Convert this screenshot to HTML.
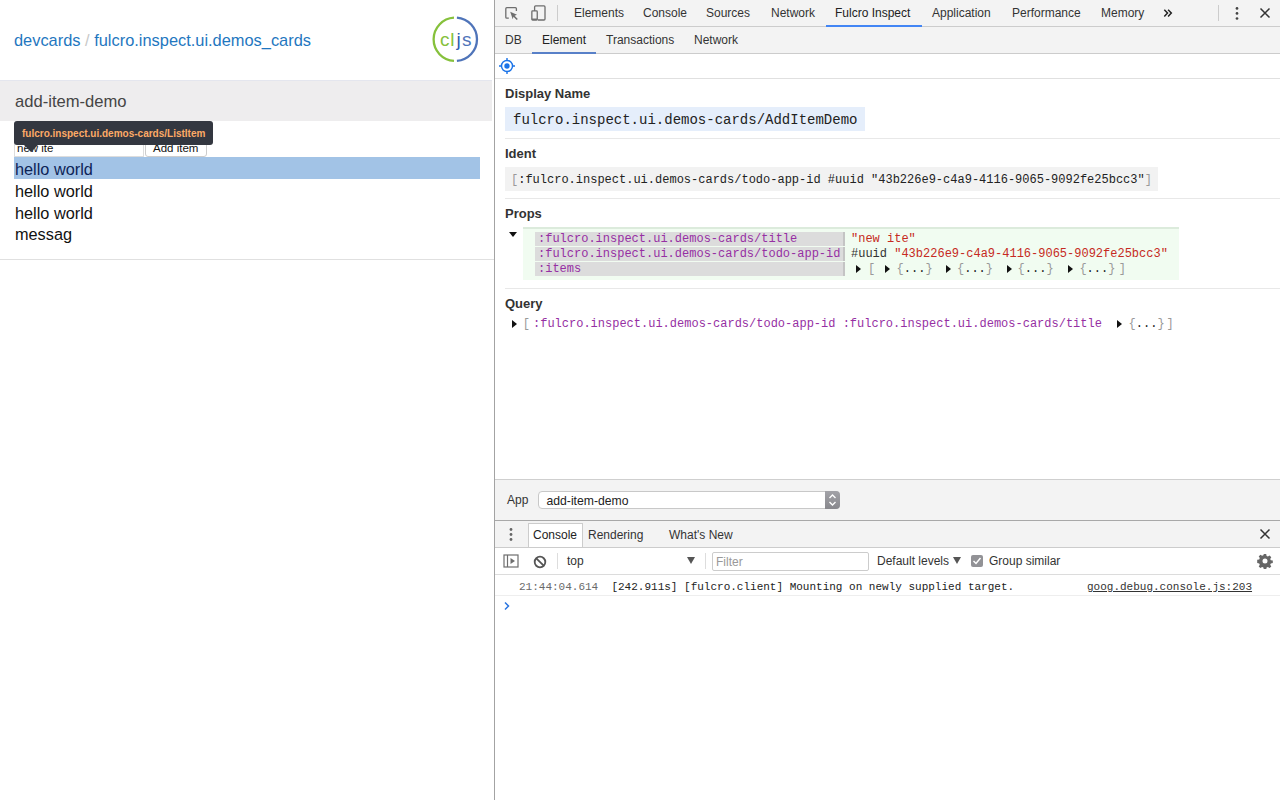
<!DOCTYPE html>
<html><head><meta charset="utf-8">
<style>
*{box-sizing:border-box;margin:0;padding:0}
html,body{width:1280px;height:800px;overflow:hidden;background:#fff;font-family:"Liberation Sans",sans-serif;position:relative}
.a{position:absolute;white-space:pre}
.mono{font-family:"Liberation Mono",monospace}
/* left */
#left{position:absolute;left:0;top:0;width:494px;height:800px;background:#fff}
#vdiv{position:absolute;left:494px;top:0;width:1px;height:800px;background:#a3a3a3}
#dt{position:absolute;left:495px;top:0;width:785px;height:800px;background:#fff;overflow:hidden}
.tb{position:absolute;left:0;width:785px;background:#f3f3f3}
.tab{position:absolute;font-size:12px;color:#333;top:6px}
.sub{position:absolute;font-size:12px;color:#333;top:33px}
.h{position:absolute;font-size:13px;font-weight:bold;color:#333;left:10px}
.sep{position:absolute;left:10px;width:775px;height:1px;background:#e8e8e8}
.kw{color:#962fa3}
.str{color:#c62a22}
.tri{position:absolute;width:0;height:0;border-top:4px solid transparent;border-bottom:4px solid transparent;border-left:5px solid #111}
.br{color:#999}.br b{font-weight:normal;color:#222}
</style></head><body>
<div id="left">
  <div class="a" style="left:14px;top:31px;font-size:16.4px;color:#1f77c0">devcards <span style="color:#c8c8c8">/</span> fulcro.inspect.ui.demos_cards</div>
  <svg style="position:absolute;left:430px;top:15px" width="50" height="50" viewBox="0 0 50 50">
    <path d="M24 2.64 A21.7 21.7 0 0 0 24 45.96" fill="none" stroke="#86c13c" stroke-width="2.3"/>
    <path d="M26.9 2.66 A21.7 21.7 0 0 1 26.9 45.94" fill="none" stroke="#4f74b9" stroke-width="2.3"/>
    <text x="10.1" y="30.5" font-family="Liberation Sans" font-size="19" fill="#86c13c">c</text>
    <text x="20.25" y="30.5" font-family="Liberation Sans" font-size="19" fill="#86c13c">l</text>
    <text x="26.5" y="30.5" font-family="Liberation Sans" font-size="19" fill="#2f5cb0">j</text>
    <text x="32.1" y="30.5" font-family="Liberation Sans" font-size="19" fill="#4f74b9">s</text>
  </svg>
  <div style="position:absolute;left:0;top:80px;width:492px;height:41px;background:#eeedee;border-top:1px solid #e4e6ee"></div>
  <div class="a" style="left:15px;top:92px;font-size:16.6px;color:#454545">add-item-demo</div>
  <!-- input + button -->
  <div style="position:absolute;left:14px;top:139px;width:130px;height:18px;border:1px solid #ddd;border-top-color:#aaa;background:#fff"></div>
  <div class="a" style="left:17px;top:142px;font-size:11.5px;color:#111">new ite</div>
  <div style="position:absolute;left:145px;top:139px;width:62px;height:18px;border:1px solid #ccc;border-radius:3px;background:#fff"></div>
  <div class="a" style="left:153px;top:142px;font-size:11.5px;color:#111">Add item</div>
  <!-- list -->
  <div style="position:absolute;left:14px;top:157px;width:466px;height:22px;background:#a2c3e6"></div>
  <div class="a" style="left:15px;top:158px;font-size:16.3px;color:#0d2457;line-height:22px">hello world</div>
  <div class="a" style="left:15px;top:180px;font-size:16.3px;color:#111;line-height:22px">hello world</div>
  <div class="a" style="left:15px;top:202px;font-size:16.3px;color:#111;line-height:22px">hello world</div>
  <div class="a" style="left:15px;top:223px;font-size:16.3px;color:#111;line-height:22px">messag</div>
  <div style="position:absolute;left:0;top:259px;width:494px;height:1px;background:#e0e0e0"></div>
  <!-- tooltip -->
  <div style="position:absolute;left:14px;top:121px;width:199px;height:24px;background:#333740;border-radius:3px"></div>
  <div style="position:absolute;left:22.5px;top:144px;width:0;height:0;border-left:8.5px solid transparent;border-right:8.5px solid transparent;border-top:8px solid #333740"></div>
  <div class="a" style="left:22px;top:128px;font-size:10px;font-weight:bold;color:#fdaa66">fulcro.inspect.ui.demos-cards/ListItem</div>
</div>
<div id="vdiv"></div>
<div id="dt">
  <!-- top toolbar -->
  <div class="tb" style="top:0;height:27px;border-bottom:1px solid #cccccc"></div>
  <svg style="position:absolute;left:8px;top:4px" width="20" height="20" viewBox="0 0 20 20">
    <path d="M5.8 14.2 H3.8 Q2.8 14.2 2.8 13.2 V4.7 Q2.8 3.7 3.8 3.7 H12.4 Q13.4 3.7 13.4 4.7 V6.9" fill="none" stroke="#6e6e6e" stroke-width="1.3"/>
    <path d="M7.2 7.8 L14 10.8 L11.6 11.7 L14.8 14.9 L13.7 16 L10.5 12.8 L9.7 15.2 Z" fill="#6e6e6e"/>
  </svg>
  <svg style="position:absolute;left:34px;top:4px" width="20" height="20" viewBox="0 0 20 20">
    <path d="M5.6 6.9 V2.9 Q5.6 1.9 6.6 1.9 H15 Q16 1.9 16 2.9 V15 Q16 16 15 16 H8.8" fill="none" stroke="#6e6e6e" stroke-width="1.3"/>
    <rect x="2.85" y="6.9" width="5.4" height="9.1" fill="none" stroke="#6e6e6e" stroke-width="1.3" rx="0.8"/>
    <path d="M2.85 15.2 H8.25" stroke="#6e6e6e" stroke-width="1.3"/>
  </svg>
  <div style="position:absolute;left:62px;top:5px;width:1px;height:16px;background:#ccc"></div>
  <div class="tab" style="left:79px">Elements</div>
  <div class="tab" style="left:148px">Console</div>
  <div class="tab" style="left:211px">Sources</div>
  <div class="tab" style="left:276px">Network</div>
  <div class="tab" style="left:340px;color:#222">Fulcro Inspect</div>
  <div style="position:absolute;left:331px;top:25px;width:96px;height:2px;background:#4285f4"></div>
  <div class="tab" style="left:437px">Application</div>
  <div class="tab" style="left:517px">Performance</div>
  <div class="tab" style="left:606px">Memory</div>
  <svg style="position:absolute;left:668px;top:8px" width="10" height="10" viewBox="0 0 10 10"><path d="M1.3 1.8 L4.5 5.1 L1.3 8.4 M5.1 1.8 L8.3 5.1 L5.1 8.4" fill="none" stroke="#222" stroke-width="1.5"/></svg>
  <div style="position:absolute;left:723px;top:5px;width:1px;height:16px;background:#ccc"></div>
  <svg style="position:absolute;left:739.4px;top:6px" width="6" height="15" viewBox="0 0 6 15">
    <circle cx="3" cy="2.4" r="1.35" fill="#444"/><circle cx="3" cy="7.4" r="1.35" fill="#444"/><circle cx="3" cy="12.5" r="1.35" fill="#444"/>
  </svg>
  <svg style="position:absolute;left:764px;top:7px" width="12" height="12" viewBox="0 0 12 12">
    <path d="M1.5 1.5 L10.5 10.5 M10.5 1.5 L1.5 10.5" stroke="#333" stroke-width="1.5"/>
  </svg>
  <!-- sub toolbar -->
  <div class="tb" style="top:27px;height:27px;border-bottom:1px solid #cccccc"></div>
  <div class="sub" style="left:10px">DB</div>
  <div class="sub" style="left:47px;color:#222">Element</div>
  <div style="position:absolute;left:37px;top:52px;width:64px;height:2px;background:#5880c8"></div>
  <div class="sub" style="left:111px">Transactions</div>
  <div class="sub" style="left:199px">Network</div>
  <!-- inspect row -->
  <svg style="position:absolute;left:4px;top:58px" width="16" height="16" viewBox="0 0 16 16">
    <circle cx="8" cy="8" r="5.5" fill="none" stroke="#1a73e8" stroke-width="1.4"/>
    <circle cx="8" cy="8" r="2.7" fill="#1a73e8"/>
    <path d="M8 0 V2.5 M8 13.5 V16 M0 8 H2.5 M13.5 8 H16" stroke="#1a73e8" stroke-width="1.4"/>
  </svg>
  <div style="position:absolute;left:0;top:78px;width:785px;height:1px;background:#e0e0e0"></div>

  <!-- Display Name -->
  <div class="h" style="top:86px">Display Name</div>
  <div style="position:absolute;left:10px;top:107px;width:360px;height:24px;background:#e5eefb"></div>
  <div class="a mono" style="left:18px;top:112px;font-size:14px;color:#222">fulcro.inspect.ui.demos-cards/AddItemDemo</div>
  <div class="sep" style="top:138px"></div>
  <!-- Ident -->
  <div class="h" style="top:146px">Ident</div>
  <div style="position:absolute;left:10px;top:167px;width:653px;height:24px;background:#f2f2f2"></div>
  <div class="a mono" style="left:16px;top:173px;font-size:12px;color:#222"><span style="color:#999">[</span>:fulcro.inspect.ui.demos-cards/todo-app-id #uuid "43b226e9-c4a9-4116-9065-9092fe25bcc3"<span style="color:#999">]</span></div>
  <div class="sep" style="top:198px"></div>
  <!-- Props -->
  <div class="h" style="top:206px">Props</div>
  <div style="position:absolute;left:14px;top:232px;width:0;height:0;border-left:4px solid transparent;border-right:4px solid transparent;border-top:5px solid #111"></div>
  <div style="position:absolute;left:28px;top:227px;width:656px;height:53px;background:#f1fcf1;border-top:2px solid #dcebdc"></div>
  <div style="position:absolute;left:40px;top:232px;width:310px;height:14px;background:#dcdcdc;border-right:2px solid #c4c4c4"></div>
  <div style="position:absolute;left:40px;top:247px;width:310px;height:14px;background:#dcdcdc;border-right:2px solid #c4c4c4"></div>
  <div style="position:absolute;left:40px;top:262px;width:310px;height:14px;background:#dcdcdc;border-right:2px solid #c4c4c4"></div>
  <div class="a mono kw" style="left:43px;top:232px;font-size:12px;line-height:14px">:fulcro.inspect.ui.demos-cards/title</div>
  <div class="a mono kw" style="left:43px;top:247px;font-size:12px;line-height:14px">:fulcro.inspect.ui.demos-cards/todo-app-id</div>
  <div class="a mono kw" style="left:43px;top:262px;font-size:12px;line-height:14px">:items</div>
  <div class="a mono str" style="left:356px;top:232px;font-size:12px;line-height:14px">"new ite"</div>
  <div class="a mono" style="left:356px;top:247px;font-size:12px;line-height:14px;color:#333">#uuid <span class="str">"43b226e9-c4a9-4116-9065-9092fe25bcc3"</span></div>
  <div class="tri" style="left:361px;top:265px"></div>
  <div class="a mono br" style="left:373px;top:262px;font-size:12px;line-height:14px">[</div>
  <div class="tri" style="left:390px;top:265px"></div>
  <div class="a mono br" style="left:401.6px;top:262px;font-size:12px;line-height:14px">{<b>...</b>}</div>
  <div class="tri" style="left:451px;top:265px"></div>
  <div class="a mono br" style="left:462px;top:262px;font-size:12px;line-height:14px">{<b>...</b>}</div>
  <div class="tri" style="left:512px;top:265px"></div>
  <div class="a mono br" style="left:522.6px;top:262px;font-size:12px;line-height:14px">{<b>...</b>}</div>
  <div class="tri" style="left:573px;top:265px"></div>
  <div class="a mono br" style="left:584.4px;top:262px;font-size:12px;line-height:14px">{<b>...</b>}</div>
  <div class="a mono br" style="left:623.8px;top:262px;font-size:12px;line-height:14px">]</div>
  <div class="sep" style="top:288px"></div>
  <!-- Query -->
  <div class="h" style="top:296px">Query</div>
  <div class="tri" style="left:17px;top:320px"></div>
  <div class="a mono br" style="left:27.8px;top:317px;font-size:12px;line-height:14px">[</div>
  <div class="a mono kw" style="left:38px;top:317px;font-size:12px;line-height:14px">:fulcro.inspect.ui.demos-cards/todo-app-id :fulcro.inspect.ui.demos-cards/title</div>
  <div class="tri" style="left:622px;top:320px"></div>
  <div class="a mono br" style="left:633.6px;top:317px;font-size:12px;line-height:14px">{<b>...</b>}</div>
  <div class="a mono br" style="left:671.6px;top:317px;font-size:12px;line-height:14px">]</div>

  <!-- App bar -->
  <div class="tb" style="top:479px;height:42px;border-top:1px solid #cfcfcf;border-bottom:1px solid #a8a8a8"></div>
  <div class="a" style="left:12px;top:493px;font-size:12px;color:#333">App</div>
  <div style="position:absolute;left:43px;top:491px;width:302px;height:18px;background:#fff;border:1px solid #c8c8c8;border-radius:4px"></div>
  <div class="a" style="left:51.5px;top:493.5px;font-size:12.2px;color:#222">add-item-demo</div>
  <div style="position:absolute;left:330px;top:491px;width:15px;height:18px;background:linear-gradient(#a3a3a8,#88888d);border-radius:0 4px 4px 0"></div>
  <svg style="position:absolute;left:330px;top:491px" width="15" height="18" viewBox="0 0 15 18"><path d="M4.5 7 L7.5 4 L10.5 7 M4.5 11 L7.5 14 L10.5 11" fill="none" stroke="#fff" stroke-width="1.4"/></svg>

  <!-- Console drawer tabs -->
  <div class="tb" style="top:521px;height:27px;border-bottom:1px solid #cccccc"></div>
  <svg style="position:absolute;left:13px;top:527px" width="6" height="15" viewBox="0 0 6 15">
    <circle cx="3" cy="2.5" r="1.4" fill="#666"/><circle cx="3" cy="7.5" r="1.4" fill="#666"/><circle cx="3" cy="12.5" r="1.4" fill="#666"/>
  </svg>
  <div style="position:absolute;left:33px;top:523px;width:55px;height:25px;background:#fff;border:1px solid #ccc"></div>
  <div class="tab" style="left:38px;top:528px;color:#222">Console</div>
  <div class="tab" style="left:93px;top:528px">Rendering</div>
  <div class="tab" style="left:174px;top:528px">What's New</div>
  <svg style="position:absolute;left:764px;top:528px" width="12" height="12" viewBox="0 0 12 12">
    <path d="M1.5 1.5 L10.5 10.5 M10.5 1.5 L1.5 10.5" stroke="#333" stroke-width="1.5"/>
  </svg>
  <!-- console toolbar -->
  <div style="position:absolute;left:0;top:574px;width:785px;height:1px;background:#dcdcdc"></div>
  <svg style="position:absolute;left:8px;top:554px" width="18" height="14" viewBox="0 0 18 14">
    <rect x="1" y="1" width="14" height="12" fill="none" stroke="#6e6e6e" stroke-width="1.2"/>
    <path d="M4.5 1 V13" stroke="#6e6e6e" stroke-width="1.2"/>
    <path d="M7.5 4 L12 7 L7.5 10 Z" fill="#6e6e6e"/>
  </svg>
  <svg style="position:absolute;left:37.5px;top:554.5px" width="14" height="14" viewBox="0 0 14 14">
    <circle cx="7" cy="7" r="5.3" fill="none" stroke="#555" stroke-width="1.8"/>
    <path d="M3.3 3.3 L10.7 10.7" stroke="#555" stroke-width="1.8"/>
  </svg>
  <div style="position:absolute;left:62px;top:553px;width:1px;height:16px;background:#ddd"></div>
  <div class="tab" style="left:72px;top:554px;color:#333">top</div>
  <div style="position:absolute;left:192px;top:557px;width:0;height:0;border-left:4px solid transparent;border-right:4px solid transparent;border-top:7px solid #555"></div>
  <div style="position:absolute;left:210px;top:553px;width:1px;height:16px;background:#ddd"></div>
  <div style="position:absolute;left:217px;top:552px;width:157px;height:19px;background:#fff;border:1px solid #ccc;border-radius:2px"></div>
  <div class="tab" style="left:221px;top:555px;color:#999">Filter</div>
  <div class="tab" style="left:382px;top:554px;color:#333">Default levels</div>
  <div style="position:absolute;left:458px;top:557px;width:0;height:0;border-left:4px solid transparent;border-right:4px solid transparent;border-top:7px solid #555"></div>
  <div style="position:absolute;left:476px;top:555px;width:12px;height:12px;background:#929296;border-radius:2px"></div>
  <svg style="position:absolute;left:476px;top:555px" width="12" height="12" viewBox="0 0 12 12"><path d="M2.5 6 L5 8.5 L9.5 3" fill="none" stroke="#fff" stroke-width="1.5"/></svg>
  <div class="tab" style="left:494px;top:554px;color:#333">Group similar</div>
  <svg style="position:absolute;left:762px;top:553px" width="16" height="16" viewBox="0 0 16 16">
    <path fill="#666" fill-rule="evenodd" d="M6.8 1h2.4l.4 2 1.3.6 1.7-1.1 1.7 1.7-1.1 1.7.6 1.3 2 .4v2.4l-2 .4-.6 1.3 1.1 1.7-1.7 1.7-1.7-1.1-1.3.6-.4 2H6.8l-.4-2-1.3-.6-1.7 1.1-1.7-1.7 1.1-1.7-.6-1.3-2-.4V6.8l2-.4.6-1.3-1.1-1.7 1.7-1.7 1.7 1.1 1.3-.6zM8 5.5a2.5 2.5 0 1 0 0 5 2.5 2.5 0 0 0 0-5z"/>
  </svg>
  <!-- message -->
  <div class="a mono" style="left:24px;top:581px;font-size:11px;color:#222"><span style="color:#6a6a6a">21:44:04.614</span>  [242.911s] [fulcro.client] Mounting on newly supplied target.</div>
  <div class="a mono" style="left:592px;top:581px;font-size:11px;color:#333;text-decoration:underline">goog.debug.console.js:203</div>
  <div style="position:absolute;left:0;top:595px;width:785px;height:1px;background:#eeeeee"></div>
  <svg style="position:absolute;left:8px;top:601px" width="8" height="10" viewBox="0 0 8 10"><path d="M2 1.5 L5.5 5 L2 8.5" fill="none" stroke="#2a75e0" stroke-width="1.5"/></svg>
</div>
</body></html>
